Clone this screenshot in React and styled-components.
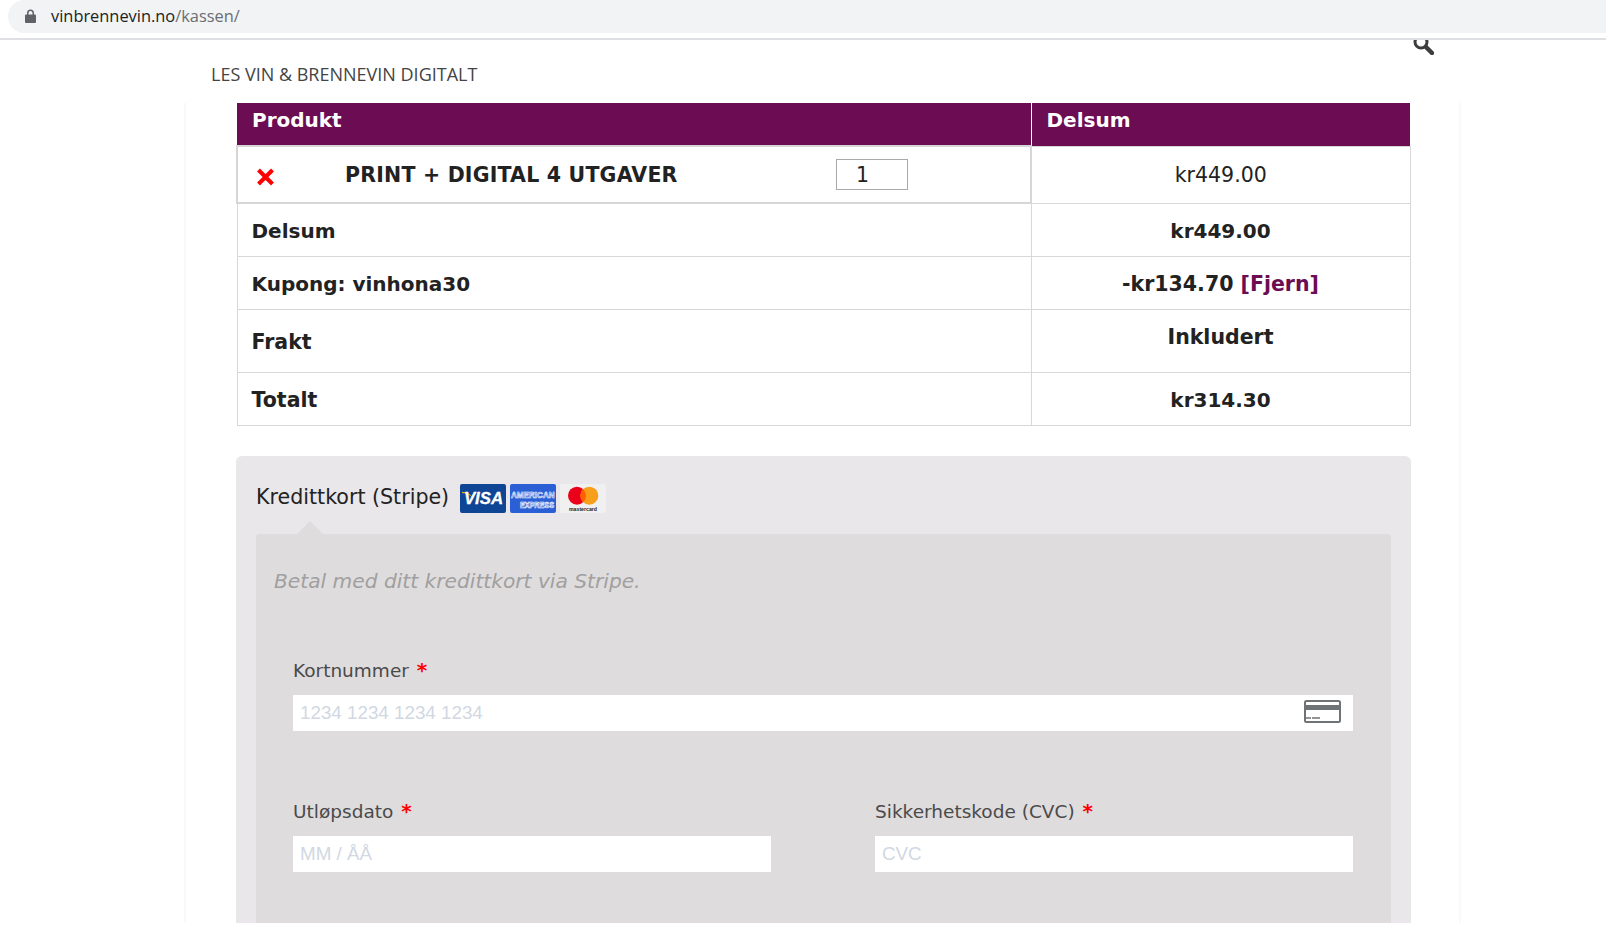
import React from 'react';
import styled, { createGlobalStyle } from 'styled-components';

const GlobalStyle = createGlobalStyle`
  html, body { margin: 0; padding: 0; background: #fff; }
  * { box-sizing: border-box; }
  body { font-family: "DejaVu Sans", Verdana, sans-serif; color: #222; }
`;

const Page = styled.div`
  height: 923px;
  overflow: hidden;
`;

const BrowserBar = styled.div`
  height: 40px;
  border-bottom: 2px solid #dfe0e4;
  padding-left: 8px;
`;

const UrlBox = styled.div`
  height: 33px;
  background: #f1f3f4;
  border-radius: 17px 0 0 17px;
  display: flex;
  align-items: center;
  padding: 0 0 2px 17px;
  gap: 15px;
  font-family: "Open Sans", sans-serif;
  font-size: 16.4px;
  color: #202124;
`;

const UrlPath = styled.span`
  color: #6b6e72;
`;

const SiteHeader = styled.header`
  height: 63px;
  display: flex;
  justify-content: space-between;
  align-items: flex-start;
  padding: 0 172px 0 211px;
`;

const Tagline = styled.div`
  margin-top: 22px;
  font-family: "Open Sans", sans-serif;
  font-size: 18px;
  line-height: 24px;
  color: #444;
`;

const Content = styled.main`
  margin: 0 145px 0 184px;
  min-height: 830px;
  border-left: 2px solid #f9f9f9;
  border-right: 2px solid #f9f9f9;
  padding: 0 48px 0 50px;
`;

const OrderTable = styled.table`
  width: 1173px;
  border-collapse: collapse;
  table-layout: fixed;
  font-size: 20.5px;
`;

const HeadCell = styled.th`
  height: 43px;
  background: #6c0d53;
  color: #fff;
  font-size: 20px;
  font-weight: bold;
  text-align: left;
  vertical-align: top;
  padding: 4px 15px 0;
  line-height: 26px;
  border-right: 1px solid #fff;
  &:last-child { border-right: 0; }
`;

const Cell = styled.td`
  height: ${p => p.$height}px;
  border: 1px solid #d8d8d8;
  padding: ${p => p.$top || 0}px 14px ${p => p.$bottom || 0}px;
  font-size: ${p => (p.$tight ? '20px' : 'inherit')};
  font-weight: ${p => (p.$light ? 'normal' : 'bold')};
  text-align: ${p => (p.$center ? 'center' : 'left')};
  color: #222;
`;

const ProductCell = styled.td`
  height: 57px;
  border: 2px solid #d6d6d6;
  padding: 1px 15px 0;
`;

const ProductRow = styled.div`
  display: flex;
  align-items: center;
  font-weight: bold;
`;

const RemoveIcon = styled.svg`
  width: 19px;
  height: 18px;
  margin: 3px 0 0 3px;
  flex: none;
`;

const ProductName = styled.span`
  margin-left: 70px;
  width: 491px;
  letter-spacing: 0.2px;
`;

const QtyBox = styled.div`
  width: 72px;
  height: 31px;
  margin-bottom: 2px;
  border: 1px solid #a9a9a9;
  font-weight: normal;
  line-height: 31px;
  padding-left: 19px;
`;

const RemoveLink = styled.a`
  color: #6c0d53;
`;

const PaymentBox = styled.section`
  margin-top: 30px;
  width: 1175px;
  background: #e9e7ea;
  border-radius: 6px 6px 0 0;
  padding: 0 20px;
  height: 500px;
`;

const MethodRow = styled.div`
  height: 78px;
  padding-top: 28px;
  display: flex;
  align-items: flex-start;
  font-size: 20.6px;
  line-height: 27px;
  color: #222;
`;

const CardIcons = styled.div`
  display: flex;
  gap: 4px;
  margin-left: 11px;
`;

const CardLogo = styled.svg`
  width: 46px;
  height: 29px;
  display: block;
`;

const Panel = styled.div`
  position: relative;
  background: #dedcdd;
  border-radius: 3px 3px 0 0;
  height: 420px;
  padding: 33px 18px 0;
  &::before {
    content: '';
    position: absolute;
    top: -13px;
    left: 41px;
    border: 13px solid transparent;
    border-top: 0;
    border-bottom-color: #dedcdd;
  }
`;

const Description = styled.p`
  margin: 0;
  font-size: 20.2px;
  line-height: 28px;
  font-style: italic;
  color: #a19f9f;
`;

const FieldGrid = styled.div`
  margin: 63px 0 0 19px;
  width: 1060px;
  display: grid;
  grid-template-columns: 478px 478px;
  justify-content: space-between;
  row-gap: 68px;
`;

const Field = styled.div`
  grid-column: ${p => (p.$wide ? '1 / -1' : 'auto')};
`;

const Label = styled.label`
  display: block;
  height: 37px;
  font-size: 18.5px;
  line-height: 24px;
  color: #4b4a4a;
`;

const Required = styled.span`
  color: #f00;
  font-size: 20px;
  font-weight: bold;
  margin-left: 2px;
`;

const InputBox = styled.div`
  height: 36px;
  background: #fff;
  display: flex;
  align-items: center;
  justify-content: space-between;
  padding: 0 12px 0 7px;
`;

const Placeholder = styled.span`
  font-family: "Liberation Sans", Arial, sans-serif;
  font-size: 18.8px;
  color: #d1d8e3;
`;

const CardGlyph = styled.svg`
  margin-bottom: 3px;
`;

const LockIcon = () => (
  <svg width="11" height="14" viewBox="0 0 11 14" fill="#5f6368">
    <path d="M2 5.500V4a3.500 3.500 0 0 1 7 0v1.500h.8c.7 0 1.200.5 1.200 1.200v6c0 .7-.5 1.300-1.200 1.300H1.200C.5 14 0 13.400 0 12.700v-6c0-.7.5-1.200 1.200-1.200zm1.500 0h4V4a2 2 0 0 0-4 0z" />
  </svg>
);

const SearchIcon = () => (
  <svg width="21" height="15" viewBox="0 6 21 15" fill="none" stroke="#3d3d3d">
    <circle cx="8" cy="8" r="6" strokeWidth="3" />
    <path d="M13 13l6 6" strokeWidth="4.500" strokeLinecap="round" />
  </svg>
);

const VisaLogo = () => (
  <CardLogo viewBox="0 0 46 29">
    <rect width="46" height="29" rx="2" fill="#0e4595" />
    <path d="M2 8c5 0 8 1.500 11 6-3-3-6-4.500-11-5z" fill="#f2ae14" />
    <text x="23.500" y="20" textAnchor="middle" fontFamily="Liberation Sans" fontWeight="bold" fontStyle="italic" fontSize="16.800" fill="#fff" stroke="#fff" strokeWidth="0.300">VISA</text>
  </CardLogo>
);

const AmexLogo = () => (
  <CardLogo viewBox="0 0 46 29">
    <rect width="46" height="29" rx="2" fill="#2a5fd6" />
    <g transform="scale(1 1.200)" fontFamily="Liberation Sans" fontWeight="bold" fill="#2a5fd6" stroke="#f2f6ff" strokeWidth="0.550">
      <text x="1" y="11.700" fontSize="8.100">AMERICAN</text>
      <text x="10" y="19.700" fontSize="7.200">EXPRESS</text>
    </g>
  </CardLogo>
);

const MastercardLogo = () => (
  <CardLogo viewBox="0 0 46 29">
    <rect width="46" height="29" rx="2" fill="#f1f0f0" />
    <circle cx="17" cy="11.700" r="9" fill="#eb001b" />
    <circle cx="29.300" cy="11.700" r="9" fill="#f79e1b" />
    <path d="M23.150 5.130a9 9 0 0 1 0 13.140 9 9 0 0 1 0-13.140z" fill="#ff5f00" />
    <text x="9" y="26.500" fontFamily="Liberation Sans" fontWeight="bold" fontSize="5.500" textLength="28" lengthAdjust="spacingAndGlyphs" fill="#222">mastercard</text>
  </CardLogo>
);

const CardIcon = () => (
  <CardGlyph width="37" height="23" viewBox="0 0 37 23">
    <rect x="1" y="1" width="35" height="21" rx="1.500" fill="none" stroke="#6f7376" strokeWidth="2" />
    <rect x="1" y="5" width="35" height="5" fill="#6f7376" />
    <path d="M2 18h5M8 18h8" stroke="#6f7376" strokeWidth="1.500" />
  </CardGlyph>
);

const App = () => (
  <Page>
    <GlobalStyle />
    <BrowserBar>
      <UrlBox>
        <LockIcon />
        <span>vinbrennevin.no<UrlPath>/kassen/</UrlPath></span>
      </UrlBox>
    </BrowserBar>
    <SiteHeader>
      <Tagline>LES VIN &amp; BRENNEVIN DIGITALT</Tagline>
      <SearchIcon />
    </SiteHeader>
    <Content>
      <OrderTable>
        <colgroup>
          <col width="794" />
          <col width="379" />
        </colgroup>
        <thead>
          <tr>
            <HeadCell>Produkt</HeadCell>
            <HeadCell>Delsum</HeadCell>
          </tr>
        </thead>
        <tbody>
          <tr>
            <ProductCell>
              <ProductRow>
                <RemoveIcon viewBox="0 0 19 18">
                  <path d="M2.500 2l14 14M16.500 2l-14 14" stroke="#f00" strokeWidth="4" />
                </RemoveIcon>
                <ProductName>PRINT + DIGITAL 4 UTGAVER</ProductName>
                <QtyBox>1</QtyBox>
              </ProductRow>
            </ProductCell>
            <Cell $height={57} $center $light>kr449.00</Cell>
          </tr>
          <tr>
            <Cell $height={53} $top={2} $tight>Delsum</Cell>
            <Cell $height={53} $top={2} $center $tight>kr449.00</Cell>
          </tr>
          <tr>
            <Cell $height={53} $top={2} $tight>Kupong: vinhona30</Cell>
            <Cell $height={53} $top={2} $center>-kr134.70 <RemoveLink>[Fjern]</RemoveLink></Cell>
          </tr>
          <tr>
            <Cell $height={63} $top={2}>Frakt</Cell>
            <Cell $height={63} $bottom={8} $center>Inkludert</Cell>
          </tr>
          <tr>
            <Cell $height={53} $top={2}>Totalt</Cell>
            <Cell $height={53} $top={2} $center $tight>kr314.30</Cell>
          </tr>
        </tbody>
      </OrderTable>
      <PaymentBox>
        <MethodRow>
          <span>Kredittkort (Stripe)</span>
          <CardIcons>
            <VisaLogo />
            <AmexLogo />
            <MastercardLogo />
          </CardIcons>
        </MethodRow>
        <Panel>
          <Description>Betal med ditt kredittkort via Stripe.</Description>
          <FieldGrid>
            <Field $wide>
              <Label>Kortnummer <Required>*</Required></Label>
              <InputBox>
                <Placeholder>1234 1234 1234 1234</Placeholder>
                <CardIcon />
              </InputBox>
            </Field>
            <Field>
              <Label>Utløpsdato <Required>*</Required></Label>
              <InputBox><Placeholder>MM / ÅÅ</Placeholder></InputBox>
            </Field>
            <Field>
              <Label>Sikkerhetskode (CVC) <Required>*</Required></Label>
              <InputBox><Placeholder>CVC</Placeholder></InputBox>
            </Field>
          </FieldGrid>
        </Panel>
      </PaymentBox>
    </Content>
  </Page>
);

export default App;
